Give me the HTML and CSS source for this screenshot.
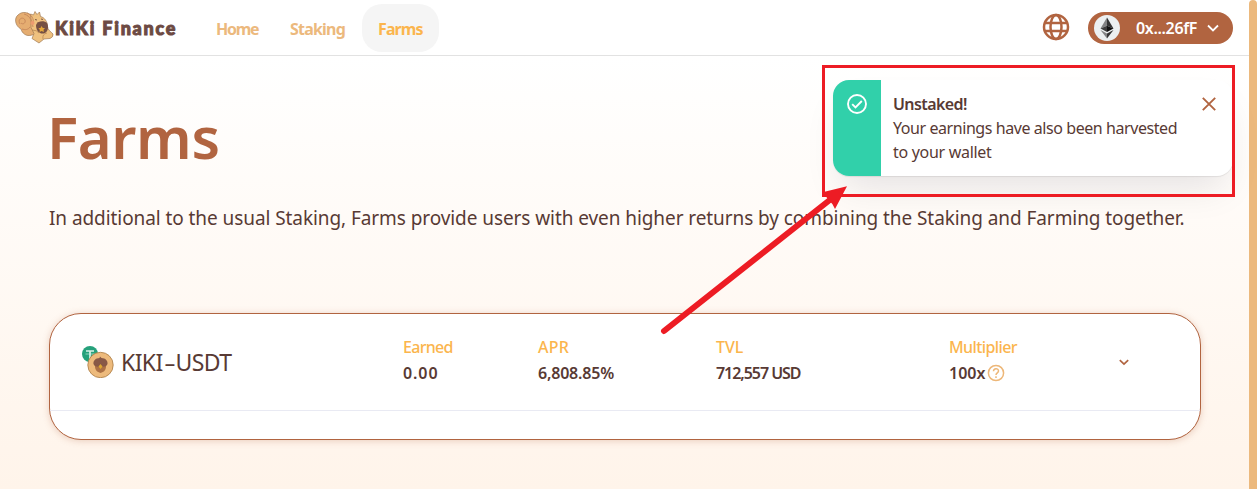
FILE: index.html
```
<!DOCTYPE html>
<html lang="en">
<head>
<meta charset="utf-8">
<title>KiKi Finance - Farms</title>
<link rel="stylesheet" href="styles.css">
</head>
<body>
<div class="page">
  <header class="topbar">
    <div class="brand">
      <svg class="brand-mark" width="39" height="34" viewBox="0 0 39 34">
        <g stroke="#a07a55" stroke-width=".7" stroke-linejoin="round">
          <path d="M17 25C11 27 7 23 6 19 0 16-1 8 3 5c4-4 10-3 14 1 5 5 3 12 5 18z" fill="#e5ad71"/>
          <path d="M16 9l-.5-5 3 1 1.500-3.500 2 3 2.500-2.500 1 4.500c4 1 7 5 7 10 0 3 3 5 5.500 7.500q.5 3-3 4.500l-6 .5-5 4-7-4.500 2-5-3-6z" fill="#efc17f"/>
        </g>
        <path d="M5 14c-3-5 3-8 5-4 1 3-2 5-4 3M9 4c7 2 8 8 9 13M12 3c5 2 7 6 6 10M7 19c3 1 6 1 8-2" fill="none" stroke="#c98a5c" stroke-width="1"/>
        <circle cx="17.500" cy="13" r="2" fill="#ec9b70"/>
        <path d="M20 9.500l2 .5M26 9l2 .5M22.500 12.500q1 .8 2 0" stroke="#634238" stroke-width=".8" fill="none"/>
        <path d="M21 15c1-4 8-5 11-2 2 4 1 8-2 10-4 2-9-1-9-8z" fill="#765043"/>
        <path d="M26.500 16l1.300 1.900 2.200.1-1.500 1.700.4 2.300-2.300-1-2 1 .2-2.300-1.500-1.500 2.200-.3z" fill="#e5a83b"/>
        <path d="M17 20q5 0 7 3M28 29q-1-5 4-6" fill="none" stroke="#b98852" stroke-width=".8"/>
      </svg>
      <span class="brand-name">KiKi Finance</span>
    </div>
    <nav class="nav">
      <a class="nav-link home">Home</a>
      <a class="nav-link staking">Staking</a>
      <a class="nav-link active">Farms</a>
    </nav>
    <div class="tools">
      <svg class="globe" width="28" height="28" viewBox="0 0 28 28" fill="none" stroke="#b16440" stroke-width="2.500">
        <circle cx="14" cy="14" r="12"/><ellipse cx="14" cy="14" rx="5.500" ry="12"/><path d="M2.500 10h23M2.500 18h23"/>
      </svg>
      <button class="wallet">
        <svg width="26" height="26" viewBox="0 0 26 26">
          <circle cx="13" cy="13" r="13" fill="#ecf0f1"/>
          <path d="M13 2.500L6.500 13.500l6.500-2.800z" fill="#828384"/><path d="M13 2.500l6.500 11-6.500-2.800z" fill="#343434"/>
          <path d="M6.500 13.500l6.500-2.800V17z" fill="#3d3d3d"/><path d="M19.500 13.500l-6.500-2.800V17z" fill="#111"/>
          <path d="M6.500 15l6.500 3.600V23.500z" fill="#828384"/><path d="M19.500 15l-6.500 3.600V23.500z" fill="#343434"/>
        </svg>
        <span class="address">0x...26fF</span>
        <svg class="wallet-caret" width="12" height="8" viewBox="0 0 12 8"><path d="M1 1.500l5 5 5-5" fill="none" stroke="#fff" stroke-width="1.800"/></svg>
      </button>
    </div>
  </header>
  <main class="content">
    <h1 class="title">Farms</h1>
    <p class="lead">In additional to the usual Staking, Farms provide users with even higher returns by combining the Staking and Farming together.</p>
    <section class="farm-card">
      <div class="farm-row">
        <div class="pair">
          <svg width="32" height="32" viewBox="0 0 32 32">
            <circle cx="8" cy="8" r="8" fill="#26a17b"/><path d="M4 5h8M8 5v8" stroke="#d9f1e9" stroke-width="1.700"/><path d="M3.500 8h9" stroke="#d9f1e9" stroke-width=".6"/>
            <circle cx="18.500" cy="19" r="12.700" fill="#edba7c" stroke="#a97c46" stroke-width=".8"/>
            <path d="M13 20h11c0 4-2 6-5.500 7-3.500-1-5.500-3-5.500-7z" fill="#ad7145"/>
            <path d="M18 10.500l1.500 1.500c4 0 6.500 3 6 6-1 3-4 3-7 2.500-3 .5-6 .5-7-2.500-.5-3 2-6 6-6z" fill="#885846"/>
            <path d="M18.500 18l2 2.500-2 2.500-2-2.500z" fill="#dda72f"/>
          </svg>
          <span class="pair-name">KIKI<span class="dash">-</span>USDT</span>
        </div>
        <div class="stat"><span class="label earned">Earned</span><span class="value zero">0.00</span></div>
        <div class="stat"><span class="label apr">APR</span><span class="value rate">6,808.85%</span></div>
        <div class="stat tvl"><span class="label">TVL</span><span class="value usd">712,557 USD</span></div>
        <div class="stat">
          <span class="label multi">Multiplier</span>
          <span class="value times">100x<svg width="18" height="18" viewBox="0 0 18 18" fill="none" stroke="#edb778" stroke-width="1.500"><circle cx="9" cy="9" r="7.600"/><path d="M6.500 7.300C6.500 3.800 11.500 3.900 11.500 7c0 1.800-2.500 1.900-2.500 4M9 12.300v1.600"/></svg></span>
        </div>
        <svg class="row-caret" width="10" height="7" viewBox="0 0 10 7"><path d="M.8 1.200L5 5.200l4.200-4" fill="none" stroke="#b16440" stroke-width="1.700"/></svg>
      </div>
    </section>
  </main>
</div>
<div class="scrollbar"></div>
<aside class="toast">
  <div class="toast-status">
    <svg width="20" height="20" viewBox="0 0 20 20" fill="none" stroke="#fff" stroke-width="1.900"><circle cx="10" cy="10" r="9"/><path d="M5.200 10.200l3.300 3.300 6.300-6.500"/></svg>
  </div>
  <div class="toast-body">
    <strong class="toast-title">Unstaked!</strong>
    <span class="toast-line">Your earnings have also been harvested</span>
    <span class="toast-line last">to your wallet</span>
  </div>
  <svg class="close" width="14" height="14" viewBox="0 0 14 14"><path d="M.8.8l12.400 12.400M13.200.8L.8 13.200" stroke="#b16440" stroke-width="1.900"/></svg>
</aside>
<div class="highlight"></div>
<svg class="arrow" width="200" height="160" viewBox="0 0 200 160"><path d="M9 146L176 14" stroke="#ed1c24" stroke-width="6" stroke-linecap="round"/><path d="M192 1.300L167.500 7.300l4 5 6 7 2.500 4.700z" fill="#ed1c24"/></svg>
</body>
</html>
```
FILE: styles.css
```
* { box-sizing: border-box; }
body { margin: 0; height: 489px; overflow: hidden; display: flex; font-family: "Noto Sans", sans-serif; color: #583a34; }
.page { width: 1249px; height: 489px; background: linear-gradient(180deg, #fff 56px, #fff4ea 489px); }
.scrollbar { width: 8px; height: 489px; background: #ecb97d; border-radius: 4px 4px 0 0; }
.topbar { height: 56px; background: #fff; border-bottom: 1px solid #e2e2e2; display: flex; align-items: center; padding: 0 16px 0 15px; }
.brand { display: flex; align-items: center; width: 185px; white-space: nowrap; }
.brand-mark { flex: none; margin-top: -1px; }
.brand-name { margin-left: 1px; font: 900 18px/24px Lato, sans-serif; letter-spacing: 1.75px; color: #6d4a43; -webkit-text-stroke: 1px #6d4a43; }
.nav { display: flex; height: 48px; line-height: 50px; font-size: 16px; font-weight: 700; color: #ecb97d; }
.nav-link { white-space: nowrap; padding-left: 16px; }
.home { width: 74px; letter-spacing: -1.3px; }
.staking { width: 88px; letter-spacing: -.8px; }
.active { width: 77px; background: #f5f5f5; border-radius: 20px; color: #fbb54d; letter-spacing: -.9px; }
.tools { margin-left: auto; display: flex; align-items: center; gap: 18px; }
.globe { margin-top: -2px; }
.wallet { width: 145px; height: 32px; border: 0; border-radius: 16px; background: #b16440; display: flex; align-items: center; padding: 0 14px 0 6px; color: #fff; font: 600 16px/32px "Noto Sans", sans-serif; }
.address { width: 61px; margin-left: 16px; white-space: nowrap; letter-spacing: -.35px; text-align: left; }
.wallet-caret { margin-left: auto; }
.content { padding: 42px 49px 0; }
.title { margin: 0 0 0 -2px; font-size: 58px; line-height: 78px; font-weight: 600; letter-spacing: -.4px; color: #b16440; }
.lead { margin: 29px 0 0; font-size: 19px; line-height: 26px; white-space: nowrap; letter-spacing: -.075px; }
.farm-card { margin-top: 82px; width: 1152px; height: 127px; border: 1px solid #b16440; border-radius: 32px; background: #fff; box-shadow: 0 1px 7px rgba(177,100,64,.28); }
.farm-row { height: 97px; border-bottom: 1px solid #e9eaf3; display: grid; grid-template-columns: 321px 135px 177px 234px 170px 10px; align-items: center; padding-left: 32px; }
.pair { display: flex; align-items: center; gap: 7px; }
.pair-name { font-size: 23px; letter-spacing: -.6px; white-space: nowrap; }
.dash { display: inline-block; transform: scaleX(1.6); margin: 0 3px; }
.stat { display: flex; flex-direction: column; line-height: 26px; font-size: 16px; white-space: nowrap; margin-top: -4px; }
.label { color: #fbb54d; font-weight: 500; }
.earned { letter-spacing: -.7px; }
.apr { letter-spacing: .2px; }
.tvl { padding-left: 1px; }
.multi { letter-spacing: -.6px; }
.value { font-weight: 600; }
.zero { letter-spacing: .9px; }
.rate { letter-spacing: -.2px; }
.usd { letter-spacing: -1.05px; }
.times { display: flex; align-items: center; gap: 2px; }
.toast { position: absolute; left: 833px; top: 80px; width: 400px; height: 96px; border-radius: 16px; background: #fff; display: flex; box-shadow: 0 20px 36px -8px rgba(14,14,44,.1), 0 1px 1px rgba(0,0,0,.08); }
.toast-status { flex: none; width: 48px; background: #31d0aa; border-radius: 16px 0 0 16px; padding: 14px; }
.toast-body { padding: 12px 0 12px 12px; display: flex; flex-direction: column; font-size: 16px; line-height: 24px; white-space: nowrap; }
.toast-title { font-weight: 600; letter-spacing: -.6px; }
.toast-line { letter-spacing: -.43px; }
.last { letter-spacing: -.3px; }
.close { flex: none; margin: 17px 17px 0 auto; }
.highlight { position: absolute; left: 822px; top: 65px; width: 413px; height: 132px; border: 3px solid #ed1c24; }
.arrow { position: absolute; left: 655px; top: 185px; }
```
